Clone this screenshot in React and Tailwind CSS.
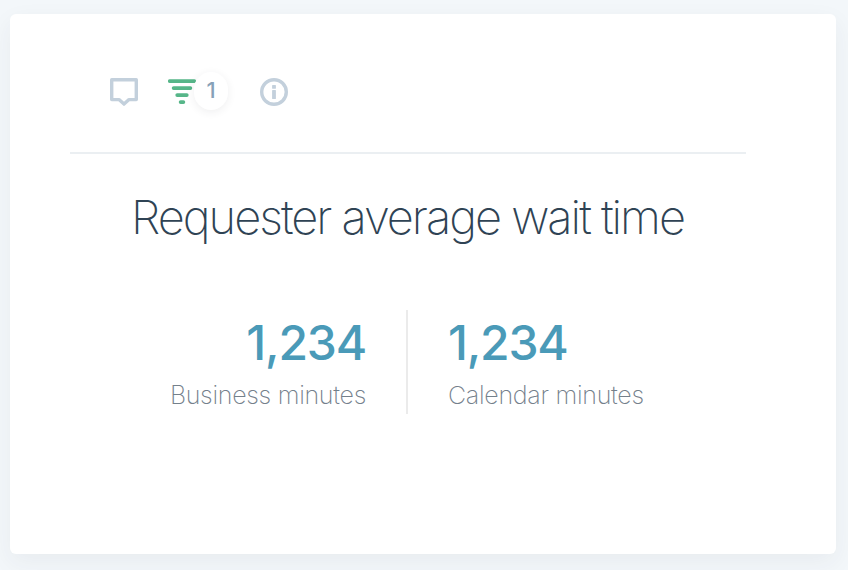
function CommentIcon() {
  return (
    <svg width="28" height="29" viewBox="0 0 28 29" fill="none" className="block">
      <path
        d="M1.7 1.7H26.3V21.6H19L14 26.1L9 21.6H1.7Z"
        stroke="#c3d0dc"
        strokeWidth="3.4"
        strokeLinejoin="round"
      />
    </svg>
  );
}

function FilterIcon() {
  return (
    <svg width="28" height="27" viewBox="0 0 28 27" fill="none" className="block">
      <path
        d="M1.8 3.1H26.2M5.6 10.1H22.4M9.2 17.1H18.8M12.6 24.1H15.4"
        stroke="#57b689"
        strokeWidth="3.7"
        strokeLinecap="round"
      />
    </svg>
  );
}

function InfoIcon() {
  return (
    <svg width="28" height="28" viewBox="0 0 28 28" fill="none" className="block">
      <circle cx="14" cy="14" r="12.3" stroke="#c3d0dc" strokeWidth="3.4" />
      <rect x="12.1" y="7" width="3.8" height="3.8" rx="0.6" fill="#c3d0dc" />
      <rect x="12.1" y="12" width="3.8" height="9" rx="0.6" fill="#c3d0dc" />
    </svg>
  );
}

function Metric({ value, label, className }) {
  return (
    <div className={className}>
      <div className="text-[48px] leading-[58px] font-medium tracking-[-1.2px] text-[#4a9ab8]">{value}</div>
      <div className="mt-[7px] text-[25px] leading-[32px] font-extralight tracking-[-0.28px] text-[#74808b]">{label}</div>
    </div>
  );
}

export default function App() {
  return (
    <div className="h-[570px] w-[848px] overflow-hidden bg-[#f3f7fa] pt-[14px] pl-[10px] font-['Inter','Liberation_Sans',sans-serif] antialiased">
      <main className="h-[540px] w-[826px] rounded-[6px] bg-white pr-[90px] pl-[60px] shadow-[0_8px_24px_rgba(47,57,65,0.06)]">
        <header className="flex h-[140px] items-start border-b-2 border-[#ebeff2] pt-[64px] pl-[40px]">
          <CommentIcon />
          <div className="relative ml-[30px] h-[28px] w-[62px]">
            <FilterIcon />
            <span className="absolute top-[-6px] left-[26px] flex h-[38px] w-[34px] items-center justify-center rounded-[17px] bg-white pb-px text-[22px] font-medium text-[#87a1b8] shadow-[0_2px_8px_rgba(47,57,65,0.08)]">
              1
            </span>
          </div>
          <div className="ml-[30px]">
            <InfoIcon />
          </div>
        </header>
        <h1 className="mt-[33px] pr-px text-center text-[47px] leading-[59px] font-extralight tracking-[-2.02px] whitespace-nowrap text-[#2f4354]">
          Requester average wait time
        </h1>
        <section className="mt-[64px] flex h-[104px]">
          <Metric value="1,234" label="Business minutes" className="w-[336px] pt-[4px] pr-[40px] text-right" />
          <div className="w-[2px] bg-[#ebebeb]" />
          <Metric value="1,234" label="Calendar minutes" className="pt-[4px] pl-[40px]" />
        </section>
      </main>
    </div>
  );
}
